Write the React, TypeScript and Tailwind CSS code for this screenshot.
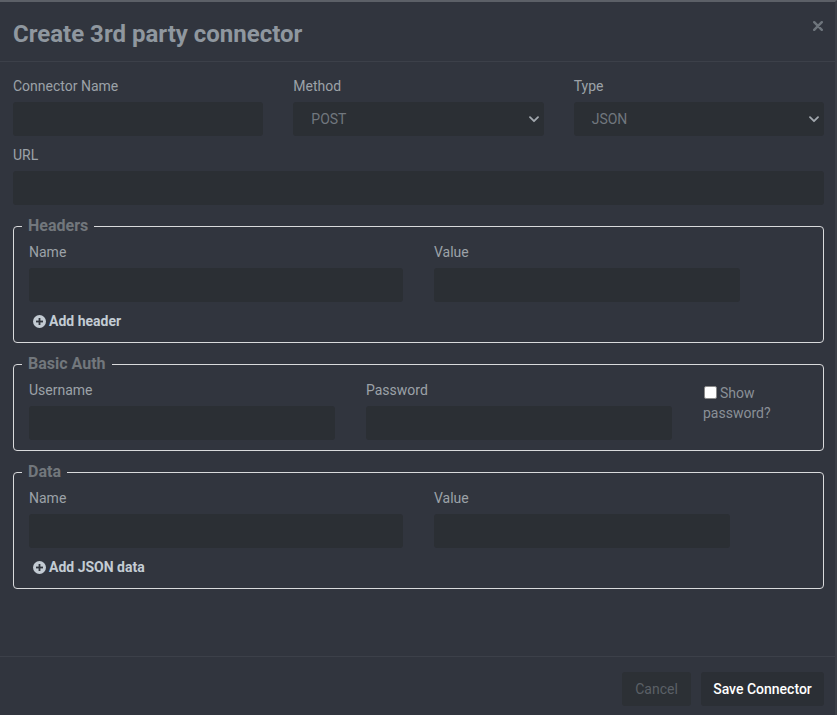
import React from "react";

function Label({ children }: { children: React.ReactNode }) {
  return <label className="block text-[14px] leading-5 text-[#9ca2a8] mb-[6px]">{children}</label>;
}

function Input({ className = "" }: { className?: string }) {
  return <div className={"h-[34px] rounded-[3px] bg-[#2b2f34] " + className} />;
}

function Chevron() {
  return (
    <svg width="10" height="7" viewBox="0 0 10 7" fill="none">
      <path d="M1 1.2 L5 5.2 L9 1.2" stroke="#a2a8ae" strokeWidth="1.8" strokeLinecap="round" strokeLinejoin="round" />
    </svg>
  );
}

function Select({ value }: { value: string }) {
  return (
    <div className="h-[34px] rounded-[3px] bg-[#2b2f34] flex items-center justify-between pl-[18px] pr-[5px]">
      <span className="text-[14px] text-[#71777e]">{value}</span>
      <Chevron />
    </div>
  );
}

function PlusCircle() {
  return (
    <svg width="13" height="13" viewBox="0 0 13 13">
      <circle cx="6.5" cy="6.5" r="6.5" fill="#c3cbd3" />
      <rect x="3" y="5.6" width="7" height="1.8" fill="#31353e" />
      <rect x="5.6" y="3" width="1.8" height="7" fill="#31353e" />
    </svg>
  );
}

function AddLink({ children }: { children: React.ReactNode }) {
  return (
    <div className="mt-[9px] flex items-center gap-[3px] pl-[4px] h-5">
      <PlusCircle />
      <span className="text-[14px] leading-5 font-bold text-[#c3ccd4]">{children}</span>
    </div>
  );
}

function Fieldset({
  title,
  className = "",
  children,
}: {
  title: string;
  className?: string;
  children: React.ReactNode;
}) {
  return (
    <fieldset className={"border border-[#d9dadc] rounded-[4px] px-[15px] pt-[6px] " + className}>
      <legend className="-ml-[7px] px-[6px] text-[16px] leading-5 font-bold text-[#72777c]">{title}</legend>
      {children}
    </fieldset>
  );
}

export default function App() {
  return (
    <div
      className="h-[715px] w-full bg-[#31353e] border-t-2 border-t-[#5c6067] border-r-2 border-r-[#3b3f47] flex flex-col"
      style={{ fontFamily: "Roboto, 'Liberation Sans', sans-serif" }}
    >
      <div className="h-[60px] border-b border-[#3c4049] flex items-start justify-between pl-[13px] pr-[11px] pt-[19px]">
        <h1 className="text-[24px] leading-[28px] -mt-[1px] font-bold text-[#8f979f]">Create 3rd party connector</h1>
        <svg width="10" height="10" viewBox="0 0 10 10" className="mt-[0px] mr-[1px]">
          <path d="M1.2 1.2 L8.8 8.8 M8.8 1.2 L1.2 8.8" stroke="#6e757c" strokeWidth="2.4" strokeLinecap="round" />
        </svg>
      </div>

      <div className="flex-1 pl-[13px] pr-[11px] pt-[14px]">
        <div className="grid grid-cols-3 gap-x-[30px]">
          <div>
            <Label>Connector Name</Label>
            <Input />
          </div>
          <div>
            <Label>Method</Label>
            <Select value="POST" />
          </div>
          <div>
            <Label>Type</Label>
            <Select value="JSON" />
          </div>
        </div>

        <div className="mt-[9px]">
          <Label>URL</Label>
          <Input />
        </div>

        <Fieldset title="Headers" className="mt-[11px] pb-[11px]">
          <div className="flex gap-[31px]">
            <div className="w-[374px]">
              <Label>Name</Label>
              <Input />
            </div>
            <div className="w-[306px]">
              <Label>Value</Label>
              <Input />
            </div>
          </div>
          <AddLink>Add header</AddLink>
        </Fieldset>

        <Fieldset title="Basic Auth" className="mt-[11px] pb-[10px]">
          <div className="flex gap-[31px]">
            <div className="w-[306px]">
              <Label>Username</Label>
              <Input />
            </div>
            <div className="w-[306px]">
              <Label>Password</Label>
              <Input />
            </div>
            <div className="w-[105px] pt-[3px] text-[14px] leading-5 text-[#8a9097]">
              <span className="inline-block w-[13px] h-[13px] bg-white border border-[#8a8a8a] rounded-[2px] align-[-1px] mr-[3px] ml-[1px]" />
              Show password?
            </div>
          </div>
        </Fieldset>

        <Fieldset title="Data" className="mt-[11px] pb-[11px]">
          <div className="flex gap-[31px]">
            <div className="w-[374px]">
              <Label>Name</Label>
              <Input />
            </div>
            <div className="w-[296px]">
              <Label>Value</Label>
              <Input />
            </div>
          </div>
          <AddLink>Add JSON data</AddLink>
        </Fieldset>
      </div>

      <div className="h-[59px] border-t border-[#3c4049] flex justify-end items-start gap-[10px] pl-[13px] pr-[11px] pt-[15px]">
        <button className="h-[34px] w-[69px] rounded-[3px] bg-[#2c3035] text-[14px] text-[#5b6067]">Cancel</button>
        <button className="h-[34px] w-[123px] rounded-[3px] bg-[#2b2f35] text-[14px] font-medium text-white">Save Connector</button>
      </div>
    </div>
  );
}
